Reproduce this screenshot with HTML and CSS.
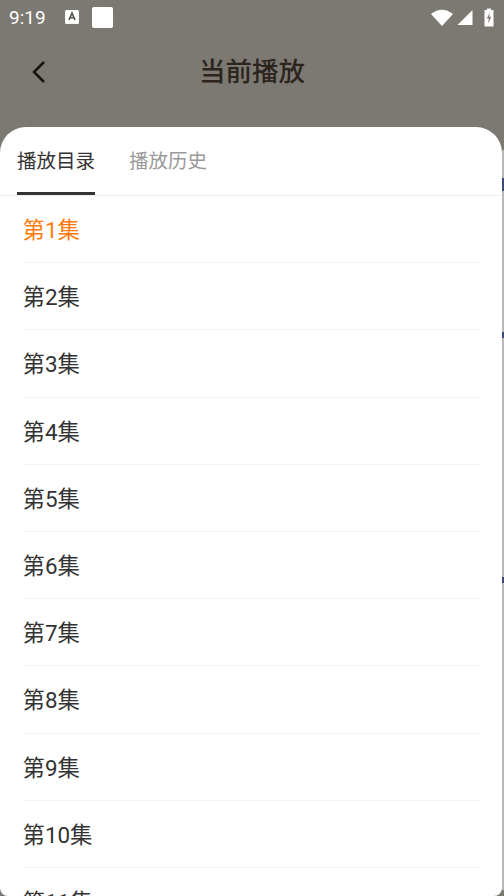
FILE: index.html
```html
<!DOCTYPE html>
<html lang="zh-CN">

<head>
  <meta charset="UTF-8">
  <meta name="viewport" content="width=device-width, initial-scale=1.0">
  <title>当前播放</title>
  <link rel="stylesheet" href="styles.css">
</head>

<body>
  <!-- 状态栏 -->
  <div class="status">
    <span class="time">9:19</span>
    <svg class="ic-a" width="14" height="14" viewBox="0 0 14 14">
      <rect x="0" y="0" width="14" height="14" rx="1.5" fill="#fff" />
      <path d="M4 10 L7 3 L10 10 M5.2 7.8 H8.8" fill="none" stroke="#55524d" stroke-width="1.6" />
    </svg>
    <div class="ic-square"></div>
    <div class="status-right">
      <svg width="22" height="17" viewBox="0 0 22 17">
        <path d="M0 5 Q11 -3.500 22 5 L11 17 Z" fill="#fff" />
      </svg>
      <svg width="16" height="15" viewBox="0 0 16 15">
        <path d="M15.500 0 V15 H0.500 Z" fill="#fff" />
      </svg>
      <svg class="batt" width="10" height="19" viewBox="0 0 10 19">
        <path d="M3 0.500 H7 V2 H9.500 V18.500 H0.500 V2 H3 Z" fill="#fff" />
        <path d="M5.800 4.500 L2.800 10.500 H4.800 L4 15.500 L7.300 8.800 H5.200 Z" fill="#7c7973" />
      </svg>
    </div>
  </div>

  <!-- 标题 -->
  <div class="header">
    <svg class="back" width="16" height="24" viewBox="0 0 16 24">
      <path d="M13 2 L3 12 L13 22" fill="none" stroke="#15130f" stroke-width="2.500" />
    </svg>
    <h1>当前播放</h1>
  </div>

  <!-- 弹层 -->
  <div class="sheet">
    <div class="tabs">
      <div class="tab active">播放目录</div>
      <div class="tab">播放历史</div>
    </div>
    <ul class="list">
      <li class="on">第1集</li>
      <li>第2集</li>
      <li>第3集</li>
      <li>第4集</li>
      <li>第5集</li>
      <li>第6集</li>
      <li>第7集</li>
      <li>第8集</li>
      <li>第9集</li>
      <li>第10集</li>
      <li>第11集</li>
    </ul>
  </div>

  <!-- 右边露出的底层 -->
  <div class="strip">
    <div class="mark mark1"></div>
    <div class="mark mark2"></div>
    <div class="mark mark3"></div>
  </div>
</body>

</html>
```

FILE: styles.css
```css
* {
  margin: 0;
  padding: 0;
  box-sizing: border-box;
}

html,
body {
  height: 100%;
  overflow: hidden;
}

body {
  background-color: #7c7973;
  font-family: Roboto, "Noto Sans CJK SC", sans-serif;
}

.status {
  display: flex;
  align-items: center;
  height: 34px;
  padding-left: 9px;
  color: #fff;
}

.time {
  width: 56px;
  font-size: 19px;
}

.ic-square {
  width: 21px;
  height: 21px;
  margin-left: 13px;
  border-radius: 2px;
  background-color: #fff;
}

.status-right {
  display: flex;
  align-items: center;
  gap: 4px;
  margin-left: auto;
  padding-right: 10px;
}

.batt {
  margin-left: 7px;
}

.header {
  position: relative;
  height: 93px;
  padding-top: 19px;
  text-align: center;
}

.back {
  position: absolute;
  top: 26px;
  left: 31px;
}

.header h1 {
  color: #2d241d;
  font-size: 26.500px;
  font-weight: 500;
  line-height: 38px;
}

.sheet {
  width: 502px;
  height: 769px;
  overflow: hidden;
  border-radius: 26px 26px 8px 8px;
  background-color: #fff;
}

.tabs {
  display: flex;
  gap: 34px;
  height: 69px;
  padding-left: 17px;
  border-bottom: 1px solid #eeeeee;
}

.tab {
  height: 68px;
  padding-top: 20px;
  color: #999;
  font-size: 19.500px;
  line-height: 30px;
}

.tab.active {
  border-bottom: 3px solid #333;
  color: #333;
}

.list {
  list-style: none;
  padding: 0 21px 0 23px;
}

.list li {
  height: 67.200px;
  border-bottom: 1px solid #f3f3f3;
  color: #333;
  font-size: 22.400px;
  line-height: 69px;
  text-indent: -.5px;
}

.list li.on {
  color: #ff7a0a;
}

.strip {
  position: absolute;
  top: 150px;
  right: 0;
  bottom: 6px;
  width: 2px;
  background-color: #b8b8b8;
}

.mark {
  position: absolute;
  left: 0;
  width: 2px;
  background-color: #3c4a78;
}

.mark1 {
  top: 28px;
  height: 13px;
}

.mark2 {
  top: 182px;
  height: 6px;
}

.mark3 {
  top: 427px;
  height: 6px;
}
```
